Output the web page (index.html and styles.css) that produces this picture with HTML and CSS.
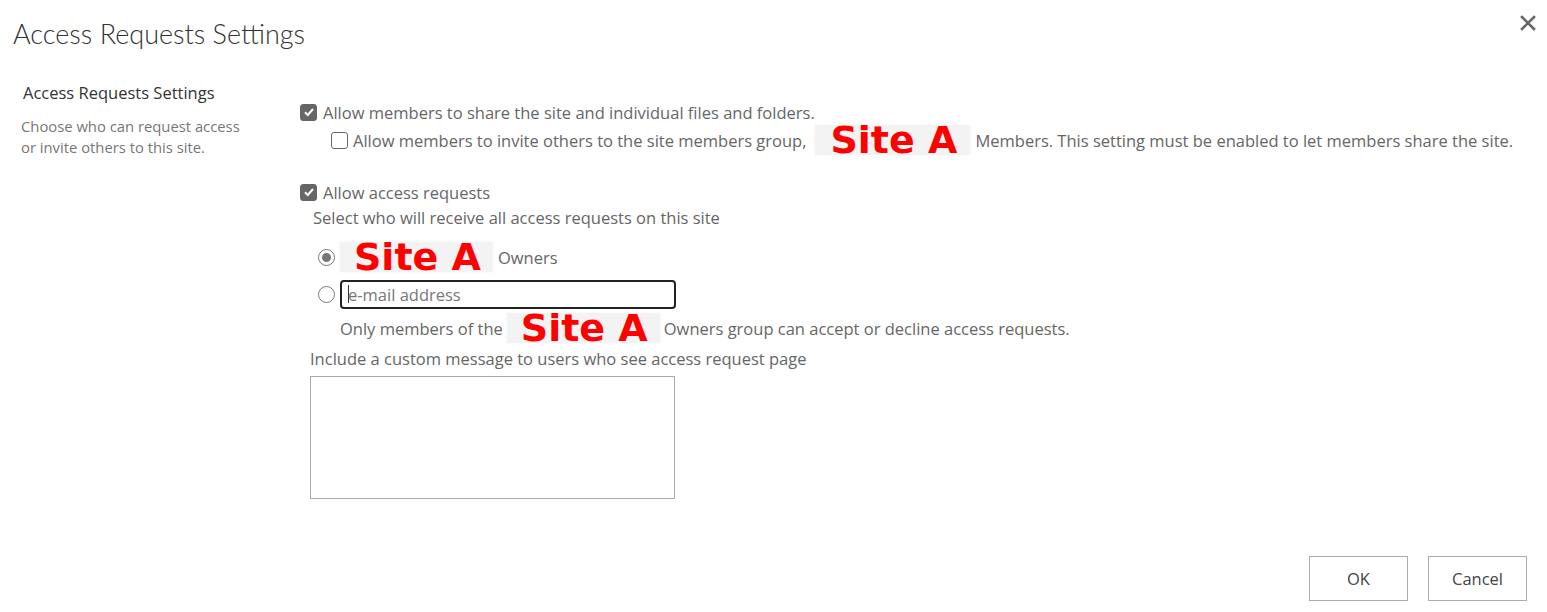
FILE: index.html
```html
<!DOCTYPE html>
<html lang="en">
<head>
  <meta charset="UTF-8" />
  <title>Access Requests Settings</title>
  <link rel="stylesheet" href="styles.css">
</head>
<body>
  <div class="dialog">
    <div class="dialog-header">
      <h1>Access Requests Settings</h1>
      <span class="close-btn">
        <svg width="16" height="16" viewBox="0 0 16 16"><path d="M2 2 L14 14 M14 2 L2 14" stroke="#666" stroke-width="2.6" stroke-linecap="square"/></svg>
      </span>
    </div>

    <div class="settings">
      <div class="section-info">
        <h3>Access Requests Settings</h3>
        <p>Choose who can request access or invite others to this site.</p>
      </div>

      <div class="section-body">
        <div class="option">
          <span class="box checked"><svg width="12" height="12" viewBox="0 0 12 12"><path d="M2 6.3 L4.8 9 L10 3" fill="none" stroke="#fff" stroke-width="2"/></svg></span>
          <span>Allow members to share the site and individual files and folders.</span>
        </div>
        <div class="option sub">
          <span class="box"></span>
          <span>Allow members to invite others to the site members group,</span>
          <span class="redact wide">Site A</span>
          <span>Members. This setting must be enabled to let members share the site.</span>
        </div>

        <div class="option spaced">
          <span class="box checked"><svg width="12" height="12" viewBox="0 0 12 12"><path d="M2 6.3 L4.8 9 L10 3" fill="none" stroke="#fff" stroke-width="2"/></svg></span>
          <span>Allow access requests</span>
        </div>
        <div class="hint">Select who will receive all access requests on this site</div>

        <div class="radio-row">
          <span class="radio on"></span>
          <span class="redact">Site A</span>
          <span>Owners</span>
        </div>
        <div class="radio-row">
          <span class="radio"></span>
          <div class="email-input"><span class="caret"></span>e-mail address</div>
        </div>
        <div class="note">
          <span>Only members of the</span>
          <span class="redact">Site A</span>
          <span>Owners group can accept or decline access requests.</span>
        </div>

        <div class="msg-label">Include a custom message to users who see access request page</div>
        <div class="msg-box"></div>
      </div>
    </div>

    <div class="dialog-footer">
      <button class="btn">OK</button>
      <button class="btn">Cancel</button>
    </div>
  </div>
</body>
</html>
```

FILE: styles.css
```css
body {
  margin: 0;
  font-family: "Open Sans", sans-serif;
  background: #fff;
  color: #666;
}
.dialog {
  width: 1547px;
  height: 612px;
  display: flex;
  flex-direction: column;
}
.dialog-header {
  display: flex;
  justify-content: space-between;
  align-items: flex-start;
  padding: 16px 11px 0 13px;
}
h1 {
  margin: 0;
  font-family: Lato, sans-serif;
  font-size: 27px;
  font-weight: 300;
  color: #333;
  line-height: 36px;
}
.close-btn {
  margin-top: -2px;
}
.settings {
  display: flex;
  padding: 30px 0 0 21px;
}
.section-info {
  width: 279px;
  flex-shrink: 0;
}
.section-info h3 {
  margin: 0 0 0 2px;
  font-size: 16.5px;
  font-weight: 400;
  color: #333;
  line-height: 22px;
}
.section-info p {
  margin: 12px 0 0;
  width: 228px;
  font-size: 14.8px;
  line-height: 21px;
  color: #777;
}
.section-body {
  padding-top: 17px;
  font-size: 16.5px;
}
.option {
  display: flex;
  align-items: center;
  gap: 6px;
  height: 26px;
}
.option.sub {
  padding-left: 31px;
  height: 30px;
  gap: 5px;
}
.option.spaced {
  margin-top: 24px;
}
.box {
  width: 15px;
  height: 15px;
  border: 1.5px solid #666;
  border-radius: 3px;
  display: flex;
  align-items: center;
  justify-content: center;
  box-sizing: content-box;
}
.box.checked {
  background: #666;
}
.redact {
  display: inline-block;
  background: #f3f3f3;
  box-shadow: 0 0 3px #f3f3f3;
  color: #f00;
  font-family: "DejaVu Sans", sans-serif;
  font-weight: bold;
  font-size: 38px;
  line-height: 30px;
  height: 30px;
  padding: 0 12px 0 14px;
}
.redact.wide {
  padding: 0 13px 0 15px;
  margin: 0 0 0 4px;
}
.hint {
  padding-left: 13px;
  margin-top: 2px;
  line-height: 22px;
}
.radio-row {
  display: flex;
  align-items: center;
  gap: 5px;
  padding-left: 18px;
  margin-top: 12px;
  height: 32px;
}
.radio-row + .radio-row {
  margin-top: 5px;
}
.radio {
  width: 15px;
  height: 15px;
  border: 1.5px solid #777;
  border-radius: 50%;
  position: relative;
  flex-shrink: 0;
}
.radio.on::after {
  content: "";
  position: absolute;
  left: 3px;
  top: 3px;
  width: 9px;
  height: 9px;
  border-radius: 50%;
  background: #777;
}
.email-input {
  width: 326px;
  height: 25px;
  border: 2px solid #222;
  border-radius: 4px;
  display: flex;
  align-items: center;
  padding-left: 6px;
  color: #777;
}
.caret {
  width: 1px;
  height: 18px;
  background: #333;
  margin-right: -1px;
}
.note {
  display: flex;
  align-items: center;
  gap: 4px;
  padding-left: 40px;
  margin-top: 2px;
  height: 32px;
}
.msg-label {
  padding-left: 10px;
  margin-top: 3px;
  line-height: 24px;
}
.msg-box {
  margin: 5px 0 0 10px;
  width: 363px;
  height: 121px;
  border: 1px solid #aaa;
}
.dialog-footer {
  margin-top: auto;
  display: flex;
  justify-content: flex-end;
  gap: 20px;
  padding: 0 20px 11px 0;
}
.btn {
  width: 99px;
  height: 45px;
  background: #fff;
  border: 1px solid #ababab;
  font-family: "Open Sans", sans-serif;
  font-size: 16.5px;
  color: #444;
}
```
